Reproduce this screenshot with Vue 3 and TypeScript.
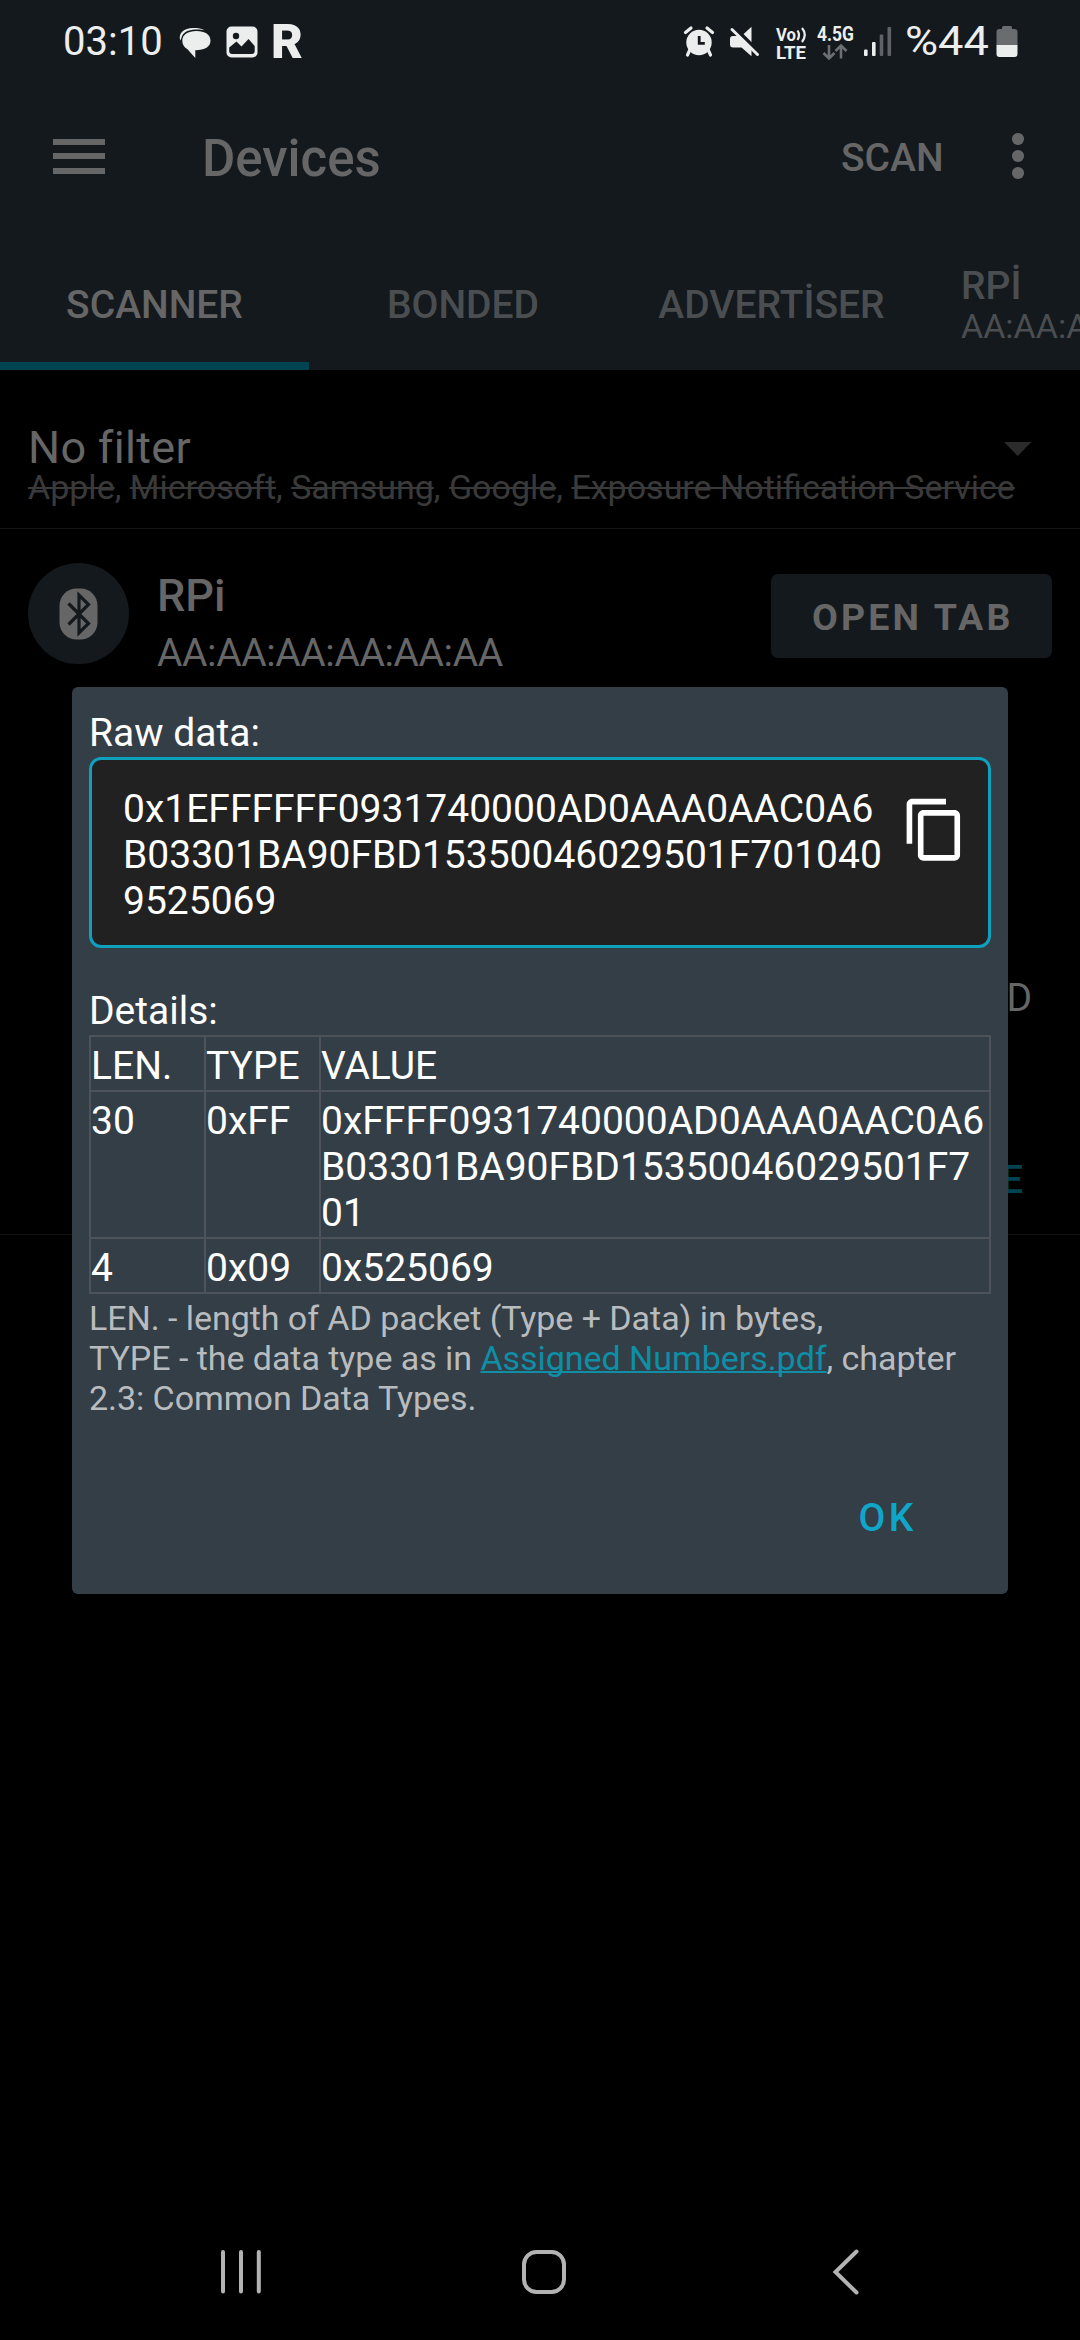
<script setup lang="ts">
interface Tab {
  label: string
  sub?: string
  kind: string
}

interface Packet {
  len: string
  type: string
  value: string[]
}

const tabs: Tab[] = [
  { label: 'SCANNER', kind: 'scanner' },
  { label: 'BONDED', kind: 'bonded' },
  { label: 'ADVERTİSER', kind: 'advertiser' },
  { label: 'RPİ', sub: 'AA:AA:A', kind: 'connection' },
]

const excluded: string[] = ['Apple', 'Microsoft', 'Samsung', 'Google', 'Exposure Notification Service']

const rawLines: string[] = [
  '0x1EFFFFFF0931740000AD0AAA0AAC0A6',
  'B03301BA90FBD15350046029501F701040',
  '9525069',
]

const packets: Packet[] = [
  {
    len: '30',
    type: '0xFF',
    value: ['0xFFFF0931740000AD0AAA0AAC0A6', 'B03301BA90FBD15350046029501F7', '01'],
  },
  { len: '4', type: '0x09', value: ['0x525069'] },
]
</script>

<template>
  <div class="screen">
    <div class="status">
      <span class="time">03:10</span>
      <svg class="i-chat" width="32" height="32" viewBox="0 0 32 32">
        <path d="M1.200 13.500C-1 6 5 1 14 1c5 0 9 .6 11.500 2.300C20 1.800 6.500 1.500 3.300 8.500 2.200 10.500 2.200 12.500 1.200 13.500Z" fill="#eceeee" />
        <path d="M17.500 4C9 4 3.300 7.500 3.300 13.800c0 4 2 6.800 5.200 8.400L16.300 31V23.300C26 23.300 31.500 19.500 31.500 13.800 31.500 7.500 26 4 17.500 4Z" fill="#eceeee" />
      </svg>
      <svg class="i-image" width="32" height="32" viewBox="0 0 32 32">
        <rect x=".5" y=".5" width="31" height="31" rx="5" fill="#eceeee" />
        <circle cx="10" cy="10" r="3.200" fill="#14191d" />
        <path d="M3.200 21.500 10.500 15.500 15.500 20.500 22.500 13 28.700 20V25a3 3 0 0 1-3 3H6.200a3 3 0 0 1-3-3Z" fill="#14191d" />
      </svg>
      <span class="r-app">R</span>
      <span class="spacer"></span>
      <svg class="i-alarm" width="30" height="31" viewBox="0 0 30 31">
        <path d="M1.500 6.500 7 2M28.500 6.500 23 2" stroke="#eceeee" stroke-width="3.200" stroke-linecap="round" />
        <path d="M5.500 24.500 3.500 29M24.500 24.500 26.500 29" stroke="#eceeee" stroke-width="3.200" stroke-linecap="round" />
        <circle cx="15" cy="16.500" r="12.700" fill="#eceeee" />
        <path d="M15.200 10V17.300H20.800" fill="none" stroke="#14191d" stroke-width="2.800" />
      </svg>
      <svg class="i-mute" width="31" height="31" viewBox="0 0 31 31">
        <path d="M22.500.8V30.200L12.500 21.500H4a3 3 0 0 1-3-3V13a3 3 0 0 1 3-3h8.500Z" fill="#eceeee" />
        <path d="M4.500.8 31 27.300" stroke="#14191d" stroke-width="4" />
        <path d="M3 3.500 28.500 28.500" stroke="#eceeee" stroke-width="3" stroke-linecap="round" />
      </svg>
      <svg class="i-volte" width="34" height="36" viewBox="0 0 34 36">
        <g fill="#eceeee" font-family="Roboto, sans-serif" font-weight="700" font-size="18.500">
          <text x="1" y="15.200" textLength="20" lengthAdjust="spacingAndGlyphs">Vo</text>
          <text x="1" y="32.500" textLength="30" lengthAdjust="spacingAndGlyphs">LTE</text>
        </g>
        <path d="M22.500 4.500q3 4.500 0 9.500M27 2q5.500 6.500 0 14" fill="none" stroke="#eceeee" stroke-width="2.200" />
      </svg>
      <svg class="i-net" width="38" height="36" viewBox="0 0 38 36">
        <text x="0" y="15.200" fill="#eceeee" font-family="Roboto, sans-serif" font-weight="700" font-size="19.500" textLength="37" lengthAdjust="spacingAndGlyphs">4.5G</text>
        <path d="M12 19V32M6.500 27 12 32.500 17.500 27M24 32.500V20M18.500 25 24 19.500 29.500 25" fill="none" stroke="#6c7073" stroke-width="2.600" />
      </svg>
      <svg class="i-signal" width="28" height="30" viewBox="0 0 28 30">
        <rect x="0" y="22.500" width="3.600" height="6.500" rx="1" fill="#eceeee" />
        <rect x="8" y="15" width="3.600" height="14" rx="1" fill="#eceeee" />
        <rect x="15.700" y="7.500" width="3.600" height="21.500" rx="1" fill="#5f6366" />
        <rect x="23.500" y="0" width="3.600" height="29" rx="1" fill="#5f6366" />
      </svg>
      <span class="percent">%44</span>
      <svg class="i-battery" width="22" height="32" viewBox="0 0 22 32">
        <path d="M6 3V1.500A1.500 1.500 0 0 1 7.500 0h7A1.500 1.500 0 0 1 16 1.500V3h2.500a3 3 0 0 1 3 3V19H.5V6a3 3 0 0 1 3-3Z" fill="#696d70" />
        <path d="M.5 19h21v9a3 3 0 0 1-3 3h-15a3 3 0 0 1-3-3Z" fill="#eceeee" />
      </svg>
    </div>

    <div class="toolbar">
      <div class="burger"><i></i><i></i><i></i></div>
      <span class="title">Devices</span>
      <span class="scan">SCAN</span>
      <div class="more"><i></i><i></i><i></i></div>
    </div>

    <div class="tabs">
      <div v-for="tab in tabs" :key="tab.kind" class="tab" :class="tab.kind">
        <span class="tab-label">{{ tab.label }}</span>
        <span v-if="tab.sub" class="tab-sub">{{ tab.sub }}</span>
      </div>
    </div>

    <div class="filter">
      <div class="filter-top">
        <span>No filter</span>
        <svg width="28" height="16" viewBox="0 0 28 16"><path d="M0 2H27.500L13.700 16Z" fill="#2b2b2b" /></svg>
      </div>
      <div class="excluded"><template v-for="(name, i) in excluded" :key="name"><s>{{ name }}</s>{{ i < excluded.length - 1 ? ', ' : '' }}</template></div>
    </div>

    <div class="device">
      <div class="device-row">
        <div class="avatar">
          <svg width="39" height="52" viewBox="0 0 39 52">
            <rect x=".5" y=".5" width="38" height="51" rx="17" fill="#666" />
            <path d="M9.500 15.500 29.500 35.500 20 45V7L29.500 16.500 9.500 36.500" fill="none" stroke="#14191d" stroke-width="3.200" />
          </svg>
        </div>
        <div class="ident">
          <span class="name">RPi</span>
          <span class="mac">AA:AA:AA:AA:AA:AA</span>
        </div>
        <div class="open">OPEN TAB</div>
      </div>
      <div class="device-line">D</div>
      <div class="device-action">E</div>
    </div>

    <div class="grow"></div>

    <div class="nav">
      <svg width="42" height="46" viewBox="0 0 42 46">
        <path d="M3 3V42.500M21 3V42.500M38.800 3V42.500" stroke="#b3b3b3" stroke-width="4" stroke-linecap="round" />
      </svg>
      <svg class="home" width="46" height="46" viewBox="0 0 46 46">
        <rect x="3" y="3" width="40" height="40" rx="12.500" fill="none" stroke="#b3b3b3" stroke-width="4" />
      </svg>
      <svg width="28" height="46" viewBox="0 0 28 46">
        <path d="M24.500 2.500 3.500 23 24.500 43.500" fill="none" stroke="#b3b3b3" stroke-width="4" stroke-linecap="round" />
      </svg>
    </div>

    <div class="dialog">
      <div class="caption">Raw data:</div>
      <div class="raw">
        <div class="raw-text"><div v-for="line in rawLines" :key="line">{{ line }}</div></div>
        <svg width="67.500" height="67.500" viewBox="0 0 24 24">
          <path fill="#fff" d="M16 1H4c-1.100 0-2 .9-2 2v14h2V3h12V1zm3 4H8c-1.100 0-2 .9-2 2v14c0 1.100.9 2 2 2h11c1.100 0 2-.9 2-2V7c0-1.100-.9-2-2-2zm0 16H8V7h11v14z" />
        </svg>
      </div>
      <div class="caption details">Details:</div>
      <div class="table">
        <div class="row">
          <div class="cell">LEN.</div>
          <div class="cell">TYPE</div>
          <div class="cell">VALUE</div>
        </div>
        <div v-for="p in packets" :key="p.type" class="row">
          <div class="cell">{{ p.len }}</div>
          <div class="cell">{{ p.type }}</div>
          <div class="cell"><div v-for="v in p.value" :key="v">{{ v }}</div></div>
        </div>
      </div>
      <div class="note">
        <div>LEN. - length of AD packet (Type + Data) in bytes,</div>
        <div>TYPE - the data type as in <a>Assigned Numbers.pdf</a>, chapter</div>
        <div>2.3: Common Data Types.</div>
      </div>
      <div class="actions"><span>OK</span></div>
    </div>
  </div>
</template>

<style>
body {
  background: #000;
}
</style>

<style scoped>
.screen {
  position: relative;
  display: flex;
  flex-direction: column;
  width: 1080px;
  height: 2340px;
  overflow: hidden;
  background: #000;
  color: #666;
  font-family: Roboto, "Noto Sans", sans-serif;
  font-size: 39px;
  white-space: nowrap;
}

svg {
  display: block;
  flex: none;
  overflow: visible;
}

.status {
  display: flex;
  align-items: flex-start;
  box-sizing: border-box;
  height: 80px;
  padding: 0 62px 0 63px;
  background: #14191d;
  color: #eceeee;
}
.time {
  width: 116px;
  font-size: 40px;
  line-height: 83px;
}
.i-chat { margin-top: 27px; }
.i-image { margin: 26px 0 0 15px; }
.r-app {
  margin-left: 13px;
  font-size: 49px;
  font-weight: 900;
  line-height: 84px;
}
.spacer { flex: 1; }
.i-alarm { margin: 26px 15px 0 0; }
.i-mute { margin: 26px 15px 0 0; }
.i-volte { margin: 26px 8px 0 0; }
.i-net { margin: 26px 9px 0 0; }
.i-signal { margin: 27px 13px 0 0; }
.percent {
  width: 91px;
  font-size: 40px;
  line-height: 83px;
  transform: scaleX(1.13);
  transform-origin: left;
}
.i-battery { margin-top: 26px; }

.toolbar {
  display: flex;
  align-items: center;
  box-sizing: border-box;
  height: 152px;
  padding-left: 53px;
  background: #14191d;
}
.burger {
  display: flex;
  flex-direction: column;
  gap: 8.500px;
  width: 52px;
}
.burger i {
  height: 6px;
  background: #666;
}
.title {
  flex: 1;
  margin-left: 97px;
  padding-top: 4px;
  font-size: 51px;
  font-weight: 500;
}
.scan {
  width: 171px;
  padding-top: 3px;
  font-weight: 500;
}
.more {
  display: flex;
  flex-direction: column;
  gap: 5.500px;
  width: 68px;
}
.more i {
  width: 11.500px;
  height: 11.500px;
  border-radius: 50%;
  background: #666;
}

.tabs {
  display: flex;
  height: 138px;
  background: #14191d;
  color: #4a4e51;
  font-weight: 500;
}
.tab {
  display: flex;
  flex: none;
  flex-direction: column;
  align-items: center;
  box-sizing: border-box;
  padding-top: 50px;
}
.tab-label { line-height: 46px; }
.scanner {
  width: 309px;
  border-bottom: 8px solid #004452;
  color: #666;
}
.bonded { width: 308px; }
.advertiser { width: 309px; }
.connection {
  align-items: flex-start;
  width: 154px;
  padding: 31px 0 0 35px;
}
.tab-sub {
  font-size: 34px;
  font-weight: 400;
  line-height: 34px;
}

.filter {
  box-sizing: border-box;
  height: 159px;
  padding: 51px 28px 0;
  border-bottom: 1.500px solid #151515;
}
.filter-top {
  display: flex;
  align-items: center;
  justify-content: space-between;
  height: 53px;
  padding-right: 20px;
  font-size: 45px;
  letter-spacing: 0.300px;
}
.excluded {
  color: #3a3a3a;
  font-size: 34px;
  line-height: 26px;
}
s { text-decoration-thickness: 2px; }

.device {
  box-sizing: border-box;
  height: 706px;
  border-bottom: 1.500px solid #111;
}
.device-row {
  display: flex;
  align-items: flex-start;
  padding: 34px 28px 0;
}
.avatar {
  display: flex;
  align-items: center;
  justify-content: center;
  width: 101px;
  height: 101px;
  border-radius: 50%;
  background: #14191d;
}
.ident {
  display: flex;
  flex: 1;
  flex-direction: column;
  margin-left: 28px;
  padding-top: 6px;
}
.name {
  font-size: 45px;
  font-weight: 500;
  line-height: 53px;
}
.mac {
  letter-spacing: -0.400px;
  line-height: 62px;
}
.open {
  box-sizing: border-box;
  width: 281px;
  height: 84px;
  margin-top: 11px;
  padding-left: 41px;
  border-radius: 7px;
  background: #14191d;
  font-size: 37.500px;
  font-weight: 700;
  letter-spacing: 3.150px;
  line-height: 86px;
}
.device-line {
  margin-top: 291px;
  padding-right: 48px;
  line-height: 46px;
  text-align: right;
}
.device-action {
  margin-top: 136px;
  padding-right: 57px;
  color: #004452;
  font-weight: 500;
  line-height: 46px;
  text-align: right;
}

.grow { flex: 1; }
.nav {
  display: flex;
  justify-content: space-between;
  height: 91px;
  padding: 0 220px 0 220px;
}
.home { margin-right: 7px; }

.dialog {
  position: absolute;
  top: 687px;
  left: 72px;
  box-sizing: border-box;
  width: 936px;
  height: 907px;
  padding: 23px 17px 0;
  border-radius: 6px;
  background: #333e47;
  color: #fff;
}
.caption { line-height: 47px; }
.raw {
  display: flex;
  justify-content: space-between;
  box-sizing: border-box;
  height: 191px;
  padding: 26px 20px 0 31px;
  border: 3px solid #0fa0be;
  border-radius: 12px;
  background: #212121;
  line-height: 46px;
}
.raw svg { margin-top: 10px; }
.details { margin-top: 40px; }
.table {
  border-top: 2px solid #4d5358;
  border-left: 2px solid #4d5358;
  line-height: 46px;
}
.row {
  display: grid;
  grid-template-columns: 115px 115px 1fr;
  border-bottom: 2px solid #4d5358;
}
.cell {
  padding: 6px 0 1px 0;
  border-right: 2px solid #4d5358;
}
.note {
  margin-top: 4px;
  color: #b9bcbe;
  font-size: 34px;
  letter-spacing: -0.050px;
  line-height: 40px;
}
.note a {
  color: #0f8ea6;
  text-decoration: underline;
  text-decoration-skip-ink: none;
  text-decoration-thickness: 2px;
}
.actions {
  display: flex;
  justify-content: flex-end;
  margin-top: 77px;
  padding-right: 74px;
  color: #0fa6c9;
  font-weight: 500;
  letter-spacing: 3.500px;
  line-height: 46px;
}
</style>
